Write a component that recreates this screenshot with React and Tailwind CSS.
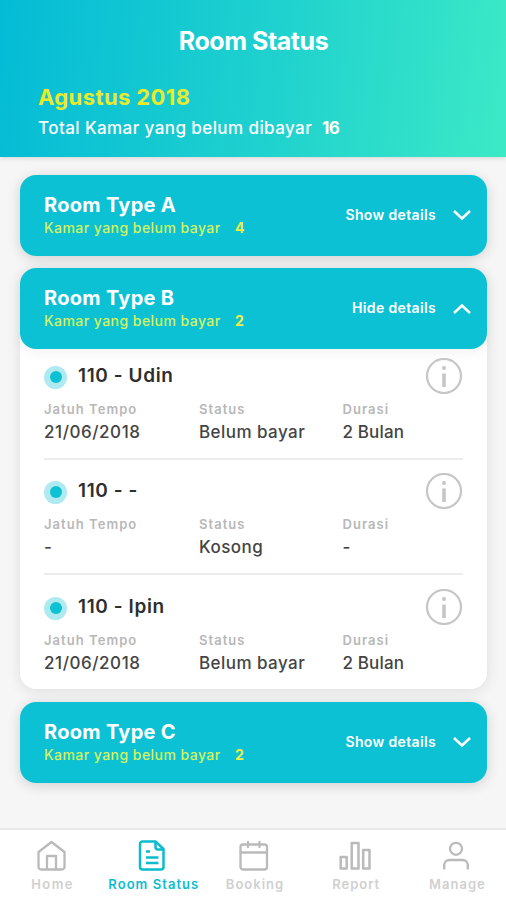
import { useState } from 'react';

const rooms = [
  { id: 'A', title: 'Room Type A', unpaid: 4, details: [] },
  {
    id: 'B',
    title: 'Room Type B',
    unpaid: 2,
    details: [
      { name: '110 - Udin', due: '21/06/2018', status: 'Belum bayar', duration: '2 Bulan' },
      { name: '110 - -', due: '-', status: 'Kosong', duration: '-' },
      { name: '110 - Ipin', due: '21/06/2018', status: 'Belum bayar', duration: '2 Bulan' },
    ],
  },
  { id: 'C', title: 'Room Type C', unpaid: 2, details: [] },
];

const HomeIcon = () => (
  <svg className="w-8 h-8" viewBox="0 0 32 32" fill="none" stroke="currentColor" strokeWidth="2.3" strokeLinejoin="round">
    <path d="M2.500 12 15.500 2l13 10v15a2.500 2.500 0 0 1-2.500 2.500H5A2.500 2.500 0 0 1 2.500 27z" />
    <path d="M11 29.500V16h9v13.500" />
  </svg>
);

const StatusIcon = () => (
  <svg className="w-8 h-8" viewBox="0 0 32 32" fill="none" stroke="currentColor" strokeWidth="2.5" strokeLinejoin="round">
    <path d="M18.500 1.500H5.500A2.500 2.500 0 0 0 3 4v23a2.500 2.500 0 0 0 2.500 2.500H24a2.500 2.500 0 0 0 2.500-2.500V9z" />
    <path d="M18.500 1.500V7a2.500 2.500 0 0 0 2.500 2.500h5.500" />
    <path d="M9 11.500h4M9 17.500h12.500M9 23h12.500" />
  </svg>
);

const BookingIcon = () => (
  <svg className="w-8 h-8" viewBox="0 0 32 32" fill="none" stroke="currentColor" strokeWidth="2.3" strokeLinecap="round">
    <rect x="2.500" y="4.500" width="26.500" height="25" rx="2.500" />
    <path d="M2.500 12.500H29M10 2v5M21.500 2v5" />
  </svg>
);

const ReportIcon = () => (
  <svg className="w-8 h-8" viewBox="0 0 32 32" fill="none" stroke="currentColor" strokeWidth="2.500" strokeLinejoin="round">
    <rect x="1.700" y="17" width="6" height="11.500" />
    <rect x="12.700" y="3" width="6.800" height="25.500" />
    <rect x="24.200" y="10" width="6.300" height="18.500" />
  </svg>
);

const ManageIcon = () => (
  <svg className="w-8 h-8" viewBox="0 0 32 32" fill="none" stroke="currentColor" strokeWidth="2.3">
    <circle cx="16" cy="8.800" r="6" />
    <path d="M4.200 29.500V25a5 5 0 0 1 5-5h13.600a5 5 0 0 1 5 5v4.500" />
  </svg>
);

const InfoIcon = () => (
  <svg className="w-9 h-9" viewBox="0 0 36 36" fill="none" stroke="#c6c6c6">
    <circle cx="18" cy="18" r="17" strokeWidth="2.200" />
    <path d="M18 15.500v13.500" strokeWidth="3.600" />
    <circle cx="18" cy="10" r="2" fill="#c6c6c6" stroke="none" />
  </svg>
);

const Chevron = ({ up }) => (
  <svg className={up ? 'w-[18px] h-3 rotate-180' : 'w-[18px] h-3 -mt-px'} viewBox="0 0 18 12" fill="none" stroke="white" strokeWidth="2.5">
    <path d="M1 2l8 7.500L17 2" />
  </svg>
);

const tabs = [
  { label: 'Home', Icon: HomeIcon, spacing: 'tracking-[1.4px]' },
  { label: 'Room Status', Icon: StatusIcon, spacing: 'tracking-[1.05px]' },
  { label: 'Booking', Icon: BookingIcon, spacing: 'tracking-[1px]' },
  { label: 'Report', Icon: ReportIcon, spacing: 'tracking-[1px]' },
  { label: 'Manage', Icon: ManageIcon, spacing: 'tracking-[1px]' },
];

function Field({ label, value, spacing }) {
  return (
    <div>
      <div className="text-[13px] leading-[22px] font-semibold tracking-[1.05px] text-[#b8b8b8]">{label}</div>
      <div className={`text-[17px] leading-6 font-medium text-[#444] ${spacing}`}>{value}</div>
    </div>
  );
}

function RoomDetail({ room }) {
  return (
    <li className="pt-[13px] pb-[14px] first:pt-[9px] last:pt-[14px] border-b-2 border-[#ececec] last:border-b-0">
      <div className="flex items-center h-9">
        <span className="flex items-center justify-center w-[23px] h-[23px] mt-0.5 rounded-full bg-[#aeeaf0]">
          <span className="w-3 h-3 rounded-full bg-[#0cc1d3]" />
        </span>
        <h3 className="ml-[11px] mt-px text-[19px] font-semibold tracking-[0.6px] text-[#2e2e2e]">{room.name}</h3>
        <button type="button" className="ml-auto mr-px" aria-label="Info">
          <InfoIcon />
        </button>
      </div>
      <div className="grid grid-cols-[155px_143.5px_1fr] mt-1">
        <Field label="Jatuh Tempo" value={room.due} spacing="tracking-[0.55px]" />
        <Field label="Status" value={room.status} spacing="tracking-[0.45px]" />
        <Field label="Durasi" value={room.duration} spacing="tracking-[0.15px]" />
      </div>
    </li>
  );
}

function RoomCard({ room, open, onToggle }) {
  return (
    <section className={`rounded-[16px] bg-white shadow-[0_2px_14px_rgba(0,0,0,0.1)] ${open ? 'mb-px' : ''}`}>
      <button
        type="button"
        onClick={onToggle}
        className="flex items-center w-full h-[81px] pl-6 pr-4 rounded-[16px] bg-[#0cc1d3] text-left shadow-[0_3px_14px_rgba(0,0,0,0.06)]"
      >
        <div>
          <h2 className="mt-px text-[20px] leading-6 font-bold tracking-[0.3px] text-white">{room.title}</h2>
          <p className="-mt-px flex text-[14px] leading-6 font-medium text-[#d5f45c]">
            <span className="w-[191px] tracking-[0.45px]">Kamar yang belum bayar</span>
            <span className="font-bold text-[#eef04a]">{room.unpaid}</span>
          </p>
        </div>
        <span className="ml-auto mr-[17px] -mt-0.5 text-[14px] font-semibold tracking-[0.35px] text-white">
          {open ? 'Hide details' : 'Show details'}
        </span>
        <Chevron up={open} />
      </button>
      {open && (
        <ul className="px-6">
          {room.details.map((detail, i) => (
            <RoomDetail key={i} room={detail} />
          ))}
        </ul>
      )}
    </section>
  );
}

export default function App() {
  const [openRoom, setOpenRoom] = useState('B');
  const [activeTab, setActiveTab] = useState('Room Status');

  return (
    <div className="flex flex-col w-full h-[900px] overflow-hidden bg-[#f6f6f6] font-['Inter','Liberation_Sans',sans-serif]">
      <header className="h-[157px] shrink-0 pt-[25px] bg-[linear-gradient(97deg,#04bbd6_0%,#20d2ce_55%,#3ce9c6_100%)] shadow-[0_1px_5px_rgba(0,0,0,0.15)]">
        <h1 className="pl-px text-center text-[25px] leading-8 font-bold tracking-[-0.45px] text-white">Room Status</h1>
        <div className="pl-[38px] pt-6">
          <p className="text-[22px] leading-8 font-bold tracking-[0.4px] text-[#e8ea2c]">Agustus 2018</p>
          <p className="flex text-[17px] leading-[30px] font-medium text-white">
            <span className="w-[284px] tracking-[0.42px]">Total Kamar yang belum dibayar</span>
            <span className="font-bold tracking-[-0.6px]">16</span>
          </p>
        </div>
      </header>

      <main className="flex-1 flex flex-col pl-5 pr-[19px] pt-[18px]">
        <div className="flex flex-col gap-3">
          {rooms.map((room) => (
            <RoomCard
              key={room.id}
              room={room}
              open={openRoom === room.id}
              onToggle={() => setOpenRoom(openRoom === room.id ? '' : room.id)}
            />
          ))}
        </div>
      </main>

      <nav className="grid grid-cols-5 h-[72px] shrink-0 border-t-2 border-[#e9e9e9] bg-white pt-[10px] pl-px -mr-px">
        {tabs.map(({ label, Icon, spacing }) => (
          <button
            key={label}
            type="button"
            onClick={() => setActiveTab(label)}
            className={`flex flex-col items-center whitespace-nowrap ${activeTab === label ? 'text-[#0cbccd]' : 'text-[#bababa]'}`}
          >
            <Icon />
            <span
              className={`mt-0.5 pl-0.5 text-[13px] leading-5 font-semibold ${spacing} ${
                activeTab === label ? '' : 'text-[#d0d0d0]'
              }`}
            >
              {label}
            </span>
          </button>
        ))}
      </nav>
    </div>
  );
}
